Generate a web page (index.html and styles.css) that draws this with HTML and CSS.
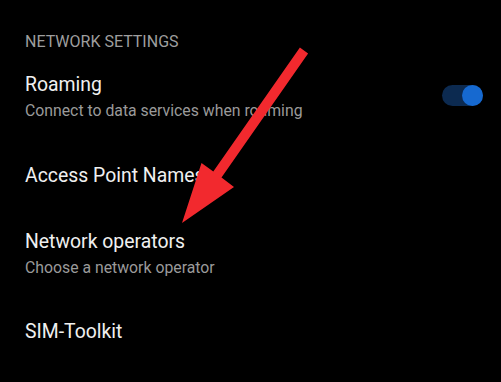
FILE: index.html
```html
<!DOCTYPE html>
<html>
<head>
<meta charset="utf-8">
<link rel="stylesheet" href="styles.css">
</head>
<body>
<div class="screen">
  <div class="header">NETWORK SETTINGS</div>
  <div class="item">
    <div class="texts">
      <div class="title">Roaming</div>
      <div class="sub">Connect to data services when roaming</div>
    </div>
    <div class="toggle"><div class="thumb"></div></div>
  </div>
  <div class="item">
    <div class="texts">
      <div class="title">Access Point Names</div>
    </div>
  </div>
  <div class="item">
    <div class="texts">
      <div class="title">Network operators</div>
      <div class="sub">Choose a network operator</div>
    </div>
  </div>
  <div class="item">
    <div class="texts">
      <div class="title">SIM-Toolkit</div>
    </div>
  </div>
  <svg class="arrow" width="501" height="382" viewBox="0 0 501 382">
    <polygon points="299.9,47.6 308.1,53.4 221.5,177.5 234,187 182,223 201.5,163 213.3,171.6" fill="#f2292e"/>
  </svg>
</div>
</body>
</html>
```
FILE: styles.css
```css
html, body {
  margin: 0;
  padding: 0;
  background: #000;
}
.screen {
  position: relative;
  width: 501px;
  height: 382px;
  overflow: hidden;
  background: #000;
  font-family: Roboto, "Noto Sans", sans-serif;
  display: flex;
  flex-direction: column;
}
.header {
  padding: 32px 0 0 25px;
  font-size: 16px;
  line-height: 20px;
  color: #9e9e9e;
}
.item {
  display: flex;
  align-items: center;
  justify-content: space-between;
  padding: 21.2px 18px 21.2px 25px;
}
.texts {
  display: flex;
  flex-direction: column;
}
.title {
  font-size: 19.4px;
  line-height: 24px;
  color: #f0f0f0;
}
.sub {
  margin-top: 4px;
  font-size: 15.8px;
  line-height: 20px;
  color: #9a9a9a;
}
.toggle {
  width: 41px;
  height: 21px;
  border-radius: 11px;
  background: #0c2a50;
  display: flex;
  justify-content: flex-end;
  margin-top: -4px;
}
.thumb {
  width: 21px;
  height: 21px;
  border-radius: 50%;
  background: #1669d0;
}
.arrow {
  position: absolute;
  left: 0;
  top: 0;
}
```
